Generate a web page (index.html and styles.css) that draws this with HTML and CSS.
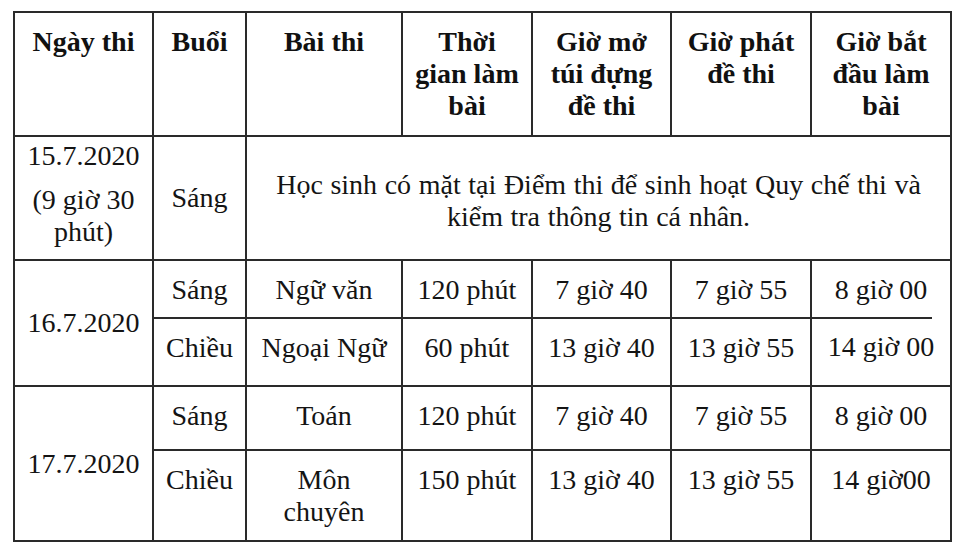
FILE: index.html
```html
<!DOCTYPE html>
<html lang="vi">
<head>
<meta charset="utf-8">
<title>Lịch thi</title>
<link rel="stylesheet" href="styles.css">
</head>
<body>
<table class="sched">
  <colgroup>
    <col class="c1"><col class="c2"><col class="c3"><col class="c4"><col class="c5"><col class="c6"><col class="c7">
  </colgroup>
  <tr class="r-head">
    <th>Ngày thi</th>
    <th>Buổi</th>
    <th>Bài thi</th>
    <th>Thời<br>gian làm<br>bài</th>
    <th>Giờ mở<br>túi đựng<br>đề thi</th>
    <th>Giờ phát<br>đề thi</th>
    <th>Giờ bắt<br>đầu làm<br>bài</th>
  </tr>
  <tr class="r-intro">
    <td class="date-first"><div class="d1">15.7.2020</div><div class="d2">(9 giờ 30<br>phút)</div></td>
    <td class="mid">Sáng</td>
    <td class="mid merged" colspan="5">Học sinh có mặt tại Điểm thi để sinh hoạt Quy chế thi và<br>kiểm tra thông tin cá nhân.</td>
  </tr>
  <tr class="r-a">
    <td class="mid" rowspan="2">16.7.2020</td>
    <td>Sáng</td>
    <td>Ngữ văn</td>
    <td>120 phút</td>
    <td>7 giờ 40</td>
    <td>7 giờ 55</td>
    <td class="short-line">8 giờ 00</td>
  </tr>
  <tr class="r-b">
    <td>Chiều</td>
    <td>Ngoại Ngữ</td>
    <td>60 phút</td>
    <td>13 giờ 40</td>
    <td>13 giờ 55</td>
    <td class="no-top">14 giờ 00</td>
  </tr>
  <tr class="r-c">
    <td class="mid" rowspan="2">17.7.2020</td>
    <td>Sáng</td>
    <td>Toán</td>
    <td>120 phút</td>
    <td>7 giờ 40</td>
    <td>7 giờ 55</td>
    <td>8 giờ 00</td>
  </tr>
  <tr class="r-d">
    <td>Chiều</td>
    <td>Môn<br>chuyên</td>
    <td>150 phút</td>
    <td>13 giờ 40</td>
    <td>13 giờ 55</td>
    <td>14 giờ00</td>
  </tr>
</table>
</body>
</html>
```
FILE: styles.css
```css
html, body {
  margin: 0;
  padding: 0;
  background: #ffffff;
}

body {
  font-family: "Liberation Serif", "Times New Roman", serif;
  color: #141414;
}

.sched {
  border-collapse: collapse;
  table-layout: fixed;
  width: 939px;
  margin: 11px 0 0 13px;
  font-size: 28px;
  line-height: 32px;
}

.c1 { width: 139px; }
.c2 { width: 93px; }
.c3 { width: 156px; }
.c4 { width: 130px; }
.c5 { width: 139px; }
.c6 { width: 140px; }
.c7 { width: 140px; }

.r-head { height: 124px; }
.r-intro { height: 124px; }
.r-a { height: 58px; }
.r-b { height: 68px; }
.r-c { height: 64px; }
.r-d { height: 91px; }

.sched th,
.sched td {
  font-family: "Liberation Serif", "Times New Roman", serif;
  border: 2px solid #2a2a2a;
  text-align: center;
  vertical-align: top;
  padding: 13px 0 0 0;
  white-space: nowrap;
}

.sched th {
  font-weight: bold;
  color: #111111;
}

.sched td.mid {
  vertical-align: middle;
  padding: 0;
}

.sched td.merged {
  padding-top: 6px;
  word-spacing: 0.6px;
}

.sched td.date-first {
  padding-top: 3px;
}

.d2 {
  margin-top: 12px;
}

.sched td.short-line {
  border-bottom-style: hidden;
  position: relative;
}

.sched td.short-line::after {
  content: "";
  position: absolute;
  left: 0;
  right: 18px;
  bottom: -1px;
  height: 2px;
  background: #2a2a2a;
}

.sched td.no-top {
  border-top-style: hidden;
}
```
